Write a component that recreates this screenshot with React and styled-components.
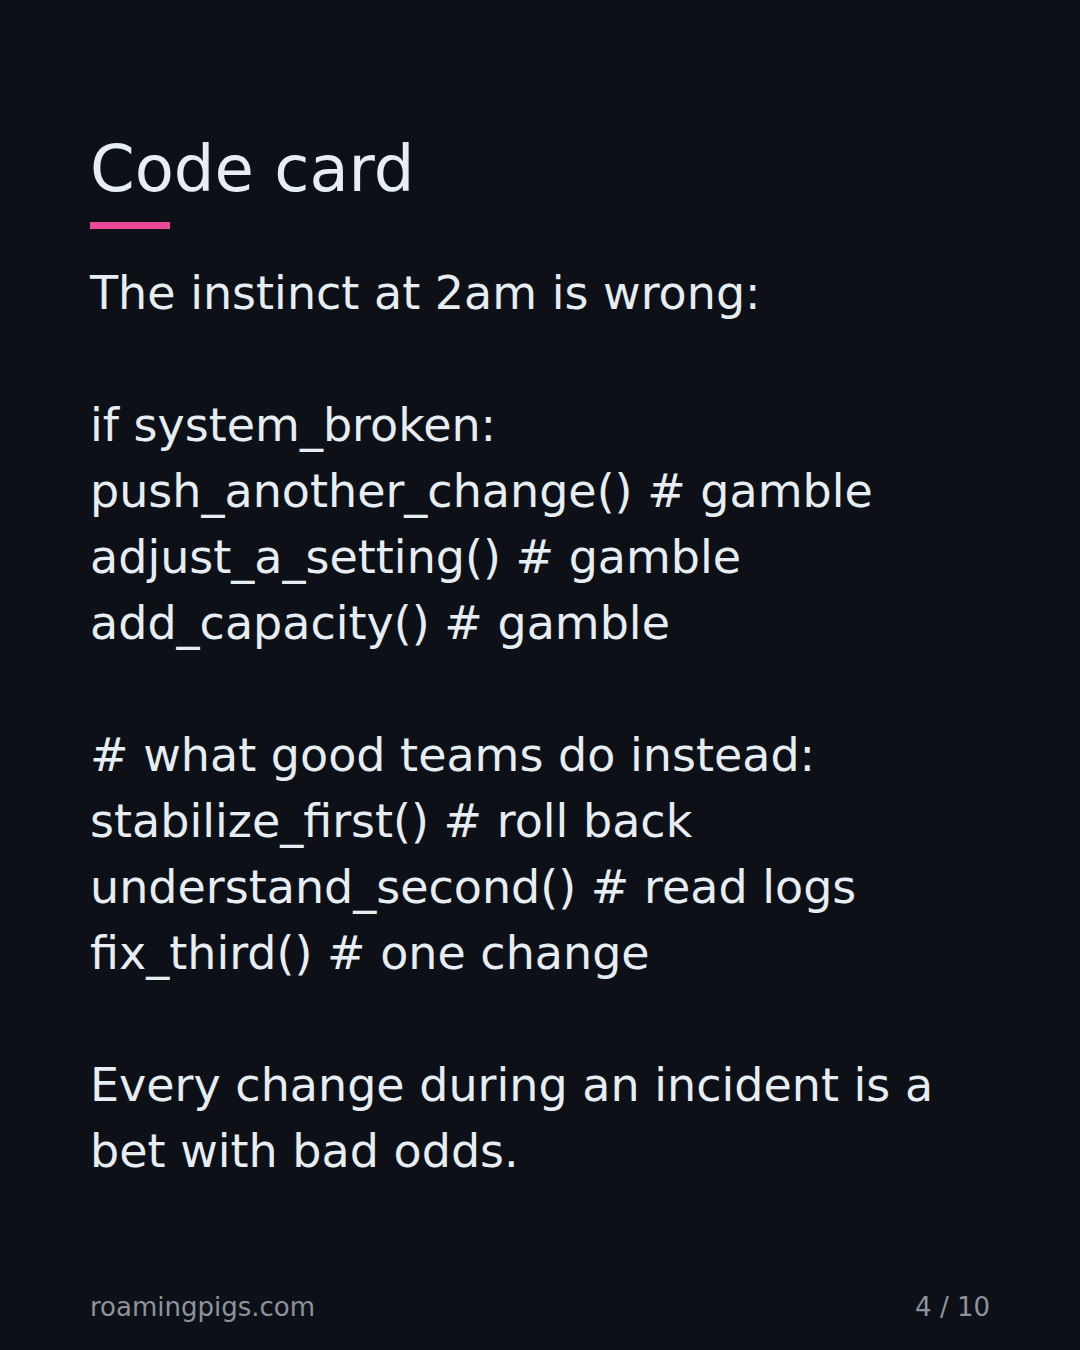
import React from 'react';
import styled, { createGlobalStyle } from 'styled-components';

const GlobalStyle = createGlobalStyle`
	html, body {
		margin: 0;
		padding: 0;
		background: #0d1117;
	}
	* {
		box-sizing: border-box;
	}
`;

const Slide = styled.div`
	width: 1080px;
	height: 1350px;
	background: #0d1117;
	color: #e6edf3;
	font-family: "DejaVu Sans", Verdana, sans-serif;
	display: flex;
	flex-direction: column;
	padding: 131px 90px 28px;
`;

const Title = styled.h1`
	margin: 0;
	font-size: 64px;
	font-weight: 400;
	line-height: 77px;
	color: #e6edf3;
`;

const Accent = styled.div`
	width: 80px;
	height: 7px;
	background: #ec4899;
	margin-top: 14px;
`;

const Body = styled.div`
	margin-top: 31px;
	font-size: 46px;
	line-height: 66px;
	white-space: pre-wrap;
	max-width: 900px;
`;

const Line = styled.div`
	min-height: 66px;
`;

const Footer = styled.div`
	margin-top: auto;
	display: flex;
	justify-content: space-between;
	align-items: baseline;
	font-size: 26px;
	line-height: 30px;
	color: #8b949e;
`;

const lines = [
	'The instinct at 2am is wrong:',
	'',
	'if system_broken:',
	'push_another_change() # gamble',
	'adjust_a_setting() # gamble',
	'add_capacity() # gamble',
	'',
	'# what good teams do instead:',
	'stabilize_first() # roll back',
	'understand_second() # read logs',
	'fix_third() # one change',
	'',
	'Every change during an incident is a bet with bad odds.',
];

export default function App() {
	return (
		<>
			<GlobalStyle />
			<Slide>
				<Title>Code card</Title>
				<Accent />
				<Body>
					{lines.map((text, i) => (
						<Line key={i}>{text}</Line>
					))}
				</Body>
				<Footer>
					<span>roamingpigs.com</span>
					<span>4 / 10</span>
				</Footer>
			</Slide>
		</>
	);
}
